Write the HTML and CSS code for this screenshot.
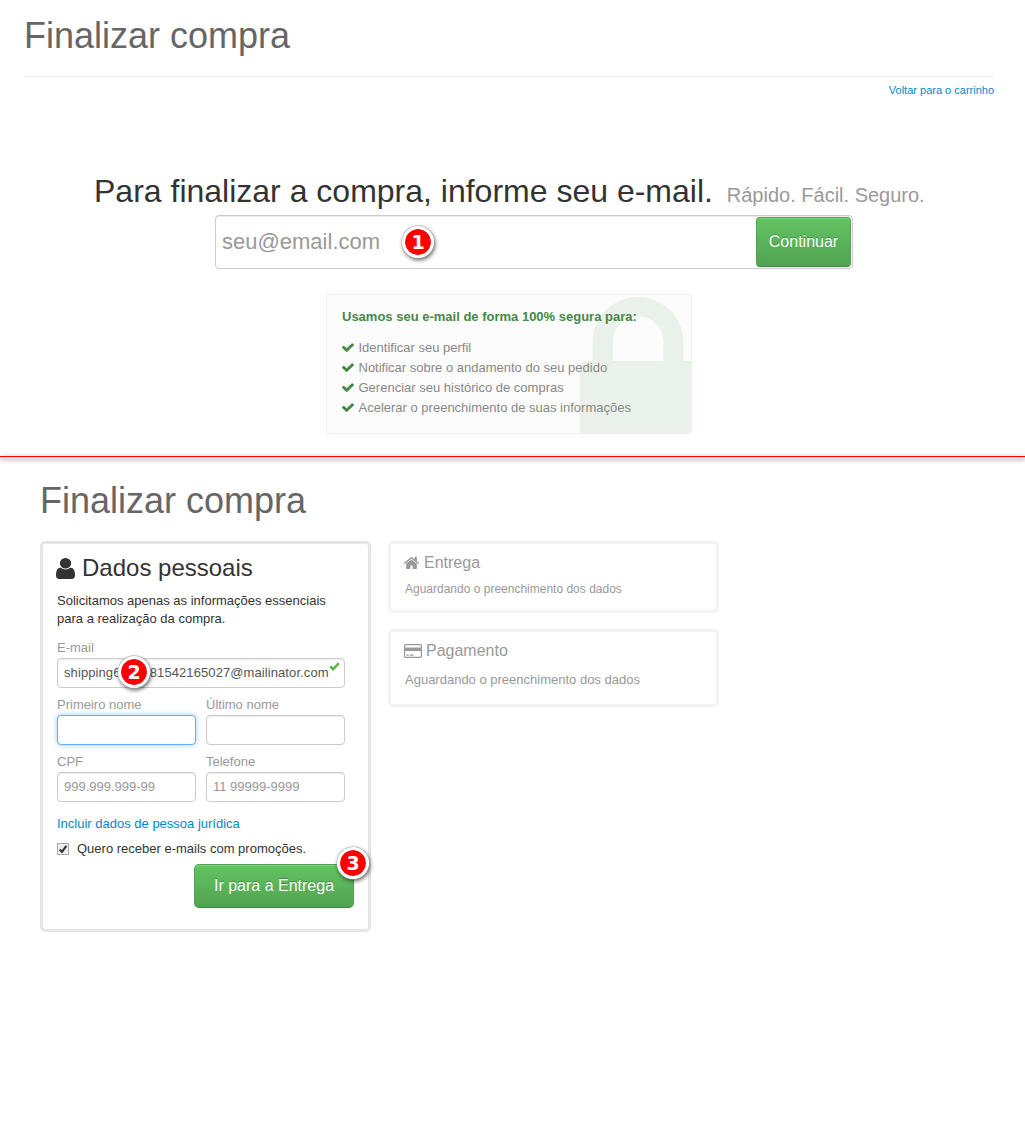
FILE: index.html
```html
<!DOCTYPE html>
<html lang="pt-BR">
<head>
<meta charset="utf-8">
<title>Finalizar compra</title>
<link rel="stylesheet" href="styles.css">
</head>
<body>
<svg class="sprite" width="0" height="0" aria-hidden="true">
  <symbol id="check" viewBox="121 310 1550 1212" preserveAspectRatio="none"><path d="M1671 566q0 40-28 68l-724 724-136 136q-28 28-68 28t-68-28l-136-136-362-362q-28-28-28-68t28-68l136-136q28-28 68-28t68 28l294 295 656-657q28-28 68-28t68 28l136 136q28 28 28 68z"/></symbol>
</svg>
<section class="step-email">
  <header class="page-header"><h1>Finalizar compra</h1></header>
  <a class="back" href="#">Voltar para o carrinho</a>
  <h2 class="lead">Para finalizar a compra, informe seu e-mail. <small>Rápido. Fácil. Seguro.</small></h2>
  <form class="email-box">
    <input class="email-input" type="text" placeholder="seu@email.com" aria-label="E-mail">
    <button class="btn btn-continue" type="button">Continuar</button>
    <span class="badge badge-1">1</span>
  </form>
  <div class="notice">
    <svg class="lock" width="111" height="139" viewBox="0 0 111 139"><path d="M12.500 69V47.500a45.500 45.500 0 0 1 91 0V66h5.500q8 0 8 6v67H0V71q0-5 6-5h6.500zM33 66h50.500V46.500a25 25 0 0 0-50.500 0z"/></svg>
    <p class="notice-title">Usamos seu e-mail de forma 100% segura para:</p>
    <ul>
      <li><svg><use href="#check"/></svg>Identificar seu perfil</li>
      <li><svg><use href="#check"/></svg>Notificar sobre o andamento do seu pedido</li>
      <li><svg><use href="#check"/></svg>Gerenciar seu histórico de compras</li>
      <li><svg><use href="#check"/></svg>Acelerar o preenchimento de suas informações</li>
    </ul>
  </div>
</section>
<hr class="divider">
<section class="step-data">
  <h1>Finalizar compra</h1>
  <div class="columns">
    <div class="card profile">
      <h3><svg class="i-user" viewBox="256 128 1280 1536" preserveAspectRatio="none"><path d="M1536 1399q0 109-62.500 187t-150.500 78h-854q-88 0-150.500-78t-62.500-187q0-85 8.500-160.500t31.500-152 58.500-131 94-89 134.500-34.500q131 128 313 128t313-128q76 0 134.500 34.500t94 89 58.500 131 31.500 152 8.500 160.500zm-256-887q0 159-112.500 271.500t-271.500 112.500-271.500-112.500-112.500-271.500 112.500-271.500 271.500-112.500 271.500 112.500 112.500 271.500z"/></svg>Dados pessoais</h3>
      <p class="intro">Solicitamos apenas as informações essenciais<br>para a realização da compra.</p>
      <div class="fields">
        <label class="field wide">E-mail
          <input class="filled" type="text" value="shipping6342581542165027@mailinator.com">
          <svg class="valid" viewBox="0 0 11 9"><path d="M1.200 4.300 4.200 7.200 9.900 1.200" fill="none" stroke="#5bb54b" stroke-width="2.400"/></svg>
          <span class="badge badge-2">2</span>
        </label>
        <label class="field">Primeiro nome<input class="focused" type="text"></label>
        <label class="field">Último nome<input type="text"></label>
        <label class="field">CPF<input type="text" placeholder="999.999.999-99"></label>
        <label class="field">Telefone<input type="text" placeholder="11 99999-9999"></label>
      </div>
      <a class="company" href="#">Incluir dados de pessoa jurídica</a>
      <div class="optin"><span class="checkbox"><svg viewBox="0 0 12 12"><path d="M2 6.500 4.800 9.500 10 2.300" fill="none" stroke="#333" stroke-width="2.600"/></svg></span>Quero receber e-mails com promoções.</div>
      <button class="btn btn-go" type="button">Ir para a Entrega<span class="badge badge-3">3</span></button>
    </div>
    <div class="side">
      <div class="card pending delivery">
        <h4><svg class="i-home" viewBox="89 253 1614 1283" preserveAspectRatio="none"><path d="M1472 992v480q0 26-19 45t-45 19h-384v-384h-256v384h-384q-26 0-45-19t-19-45v-480q0-1 .5-3t.5-3l575-474 575 474q1 2 1 6zm223-69l-62 74q-8 9-21 11h-3q-13 0-21-7l-692-577-692 577q-12 8-24 7-13-2-21-11l-62-74q-8-10-7-23.500t11-21.500l719-599q32-26 76-26t76 26l244 204v-195q0-14 9-23t23-9h192q14 0 23 9t9 23v408l219 182q10 8 11 21.500t-7 23.500z"/></svg>Entrega</h4>
        <p>Aguardando o preenchimento dos dados</p>
      </div>
      <div class="card pending payment">
        <h4><svg class="i-card" viewBox="0 128 1920 1536" preserveAspectRatio="none"><path d="M1760 128q66 0 113 47t47 113v1216q0 66-47 113t-113 47h-1600q-66 0-113-47t-47-113v-1216q0-66 47-113t113-47h1600zm-1600 128q-13 0-22.500 9.500t-9.500 22.500v224h1664v-224q0-13-9.500-22.500t-22.500-9.500h-1600zm1600 1280q13 0 22.500-9.500t9.500-22.500v-608h-1664v608q0 13 9.500 22.500t22.500 9.500h1600zm-1504-128v-128h256v128h-256zm384 0v-128h384v128h-384z"/></svg>Pagamento</h4>
        <p>Aguardando o preenchimento dos dados</p>
      </div>
    </div>
  </div>
</section>
</body>
</html>
```
FILE: styles.css
```css
* { box-sizing: border-box; }
body {
  margin: 0;
  min-height: 1134px;
  background: #fff;
  color: #333;
  font: 13px/20px "Liberation Sans", Arial, sans-serif;
}
h1, h2, h3, h4, p, ul { margin: 0; padding: 0; font-weight: normal; }
a { color: #08c; text-decoration: none; }
input, button { font-family: inherit; }
input::placeholder { color: #999; opacity: 1; }
svg { fill: currentColor; flex: none; }
.sprite { position: absolute; }
h1 { color: #666; font-size: 36px; line-height: 40px; }

.step-email {
  display: flex;
  flex-direction: column;
  height: 456px;
  padding: 16px 31px 0 24px;
}
.page-header { height: 61px; border-bottom: 1px solid #eee; }
.back { align-self: flex-end; margin-top: 3px; font-size: 11px; }
.lead {
  margin: 71px 0 0 70px;
  font-size: 32px;
  line-height: 40px;
  white-space: nowrap;
}
.lead small { margin-left: 5px; color: #999; font-size: 20px; }

.email-box {
  position: relative;
  display: flex;
  width: 638px;
  height: 54px;
  margin: 0 0 0 191px;
  padding: 1px;
  border: 1px solid #ccc;
  border-radius: 4px;
  box-shadow: inset 0 1px 1px rgba(0, 0, 0, .075);
}
.email-input {
  flex: 1;
  min-width: 0;
  padding: 0 5px;
  border: 0;
  outline: 0;
  background: none;
  font-size: 22px;
}
.btn {
  border: 1px solid #48a048;
  border-color: #51a351 #51a351 #3f8d3f;
  border-radius: 4px;
  background: linear-gradient(#62c462, #51a351);
  box-shadow: inset 0 1px 0 rgba(255, 255, 255, .2), 0 1px 2px rgba(0, 0, 0, .05);
  color: #fff;
  font-size: 16px;
  text-shadow: 0 -1px 0 rgba(0, 0, 0, .25);
}
.btn-continue { width: 95px; padding: 0; }

.badge {
  position: absolute;
  display: flex;
  align-items: center;
  justify-content: center;
  width: 32px;
  height: 32px;
  border: 3px solid #fff;
  border-radius: 50%;
  background: #f00;
  background-clip: padding-box;
  box-shadow: 0 0 0 .5px #aaa, 1px 2px 4px rgba(0, 0, 0, .65);
  color: #fff;
  font: bold 19px/26px "DejaVu Sans", sans-serif;
  text-shadow: none;
}
.badge-1 { left: 186px; top: 10px; }
.badge-2 { left: 61px; top: 18px; }
.badge-3 { right: -16px; top: -18px; }

.notice {
  position: relative;
  width: 366px;
  height: 140px;
  margin: 25px 0 0 302px;
  padding: 12px 15px;
  overflow: hidden;
  border: 1px solid #eee;
  border-radius: 3px;
  background: #fcfcfc;
  color: #888;
}
.lock { position: absolute; right: 0; top: 0; color: #eaf1ea; }
.notice-title { position: relative; color: #468847; font-weight: bold; }
.notice ul { position: relative; margin-top: 11px; list-style: none; }
.notice li { display: flex; align-items: center; }
.notice li svg { width: 12px; height: 9px; margin: 0 4.5px 1px 0; color: #468847; }

.divider {
  height: 1px;
  margin: 0;
  border: 0;
  background: #f00;
  box-shadow: 0 2px 5px 1px rgba(0, 0, 0, .3);
}

.step-data { padding: 24px 40px 0; }
.columns { display: flex; align-items: flex-start; gap: 17px; margin-top: 20px; }
.card { width: 331px; border: 3px solid #e5e5e5; border-radius: 5px; }
.profile { height: 391px; padding: 6px 14px 0; }
.profile h3 {
  display: flex;
  align-items: center;
  gap: 7px;
  margin-left: -1px;
  font-size: 24px;
  line-height: 36px;
}
.i-user { width: 19px; height: 21px; }
.intro { margin-top: 6px; line-height: 18px; }
.fields {
  display: grid;
  grid-template-columns: 139px 139px;
  gap: 7px 10px;
  margin-top: 10px;
}
.field { position: relative; display: block; color: #999; }
.wide { grid-column: span 2; }
.field input {
  display: block;
  width: 100%;
  height: 30px;
  padding: 0 6px 2px;
  border: 1px solid #ccc;
  border-radius: 4px;
  outline: 0;
  box-shadow: inset 0 1px 1px rgba(0, 0, 0, .075);
  color: #555;
  font-size: 13px;
}
.field .filled { letter-spacing: .09px; }
.field .focused { border-color: #66aff0; box-shadow: 0 0 5px rgba(82, 168, 236, .6); }
.valid { position: absolute; right: 5px; top: 24px; width: 11px; height: 9px; }
.company { display: block; margin-top: 12px; }
.optin { display: flex; align-items: center; gap: 8px; margin-top: 5px; }
.checkbox {
  display: flex;
  width: 12px;
  height: 12px;
  border: 1px solid #aaa;
  background: #eee;
}
.checkbox svg { width: 10px; height: 10px; }
.btn-go {
  position: relative;
  display: block;
  width: 160px;
  height: 44px;
  margin: 5px 0 0 137px;
  padding: 0;
  border-radius: 5px;
}
.side { display: flex; flex-direction: column; gap: 16px; }
.pending { border-color: #f3f3f3; padding: 9px 13px 0; color: #999; }
.pending h4 {
  display: flex;
  align-items: center;
  gap: 5px;
  font-size: 16px;
  line-height: 20px;
}
.pending p { margin-left: 1px; }
.delivery { height: 72px; }
.delivery p { margin-top: 6px; font-size: 12px; }
.payment { height: 78px; }
.payment p { margin-top: 9px; }
.i-home { width: 15px; height: 12px; }
.i-card { width: 18px; height: 14px; margin-right: -1px; }
```
